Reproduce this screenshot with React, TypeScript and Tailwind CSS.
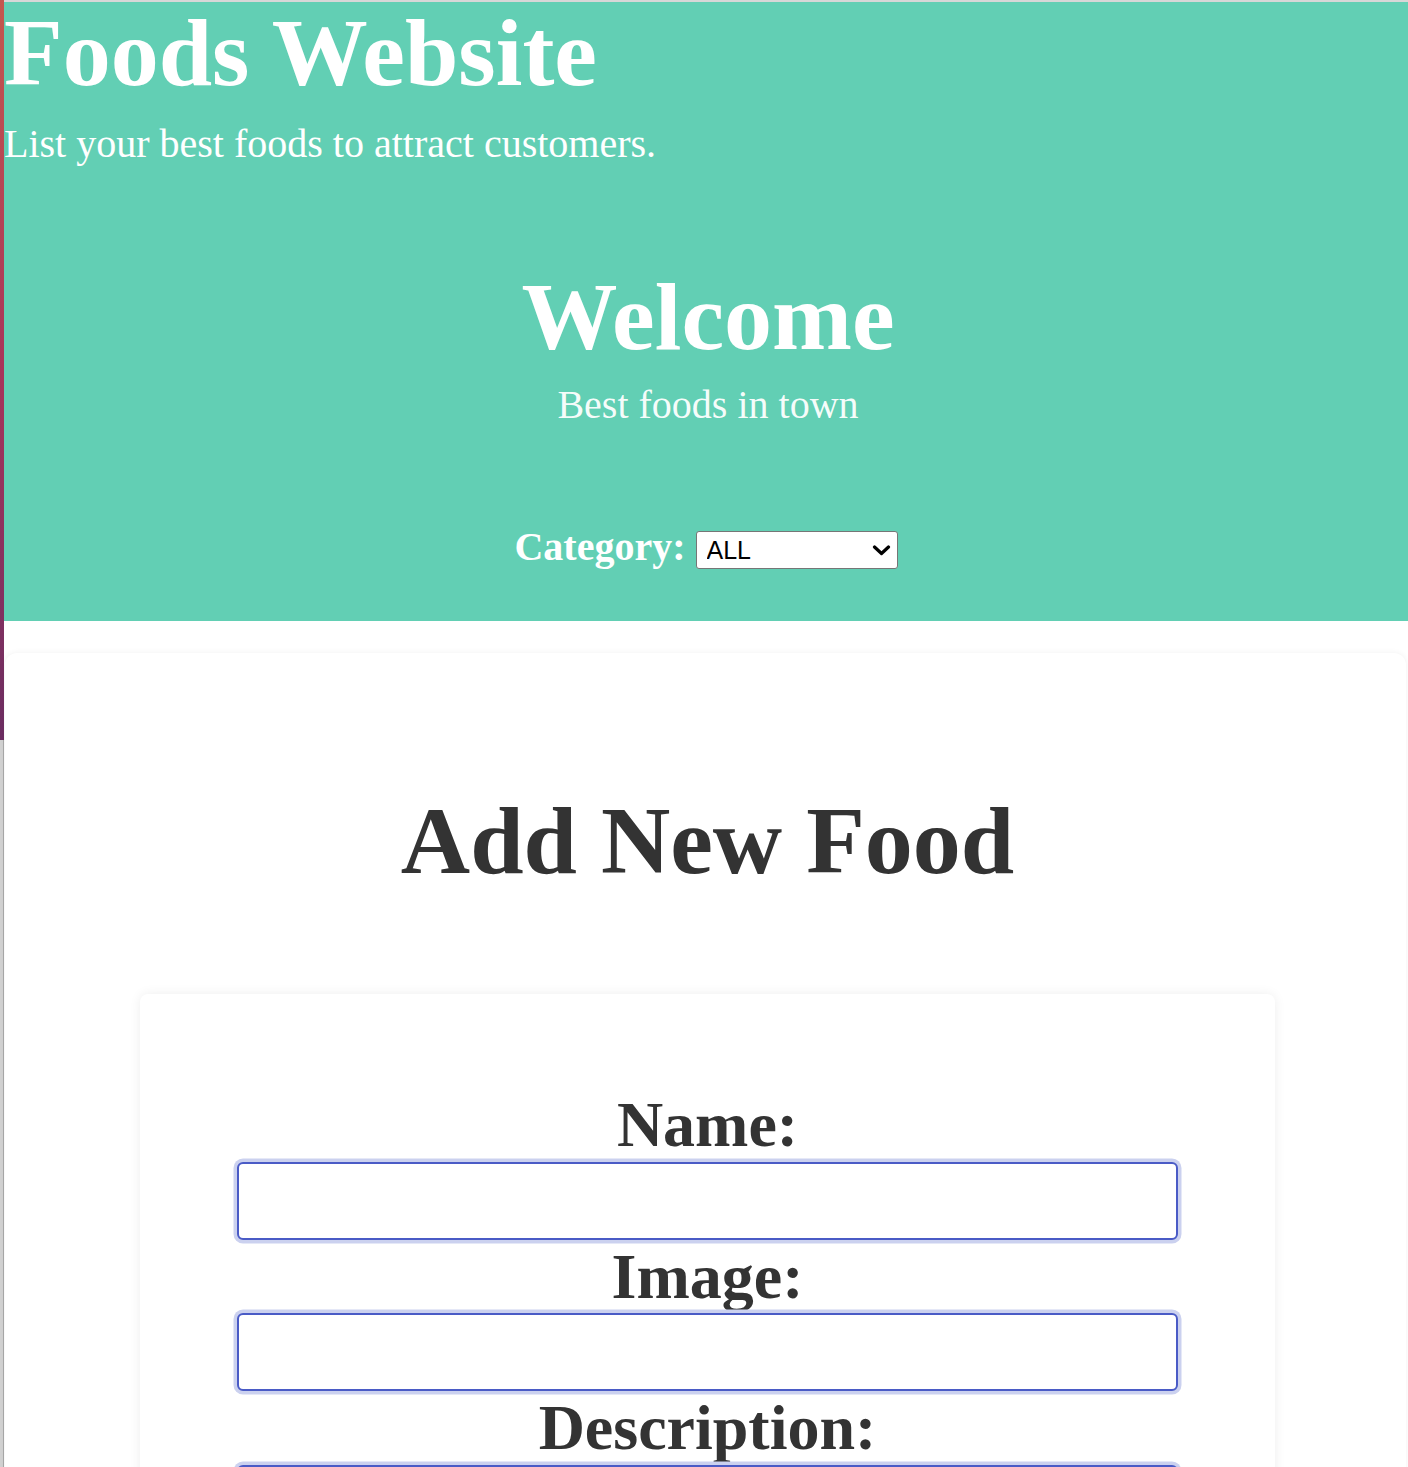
const serif = 'font-["Liberation_Serif","Times_New_Roman",serif]';

function Field({ label }: { label: string }) {
  return (
    <div className="flex flex-col">
      <label className={`${serif} block text-center text-[64px] leading-[73.5px] font-bold text-[#333333]`}>{label}</label>
      <input
        type="text"
        className="h-[78px] w-full rounded-[6px] border-2 border-[#4a5bc6] bg-white px-4 outline-none shadow-[0_0_0_3.5px_#cbd1ef]"
      />
    </div>
  );
}

export default function App() {
  return (
    <div className="flex min-h-[1467px] w-[1408px] bg-white">
      <div className="flex w-[4px] shrink-0 flex-col">
        <div className="h-[740px] bg-gradient-to-b from-[#c4574d] via-[#a8345a] to-[#6c2d62]"></div>
        <div className="flex-1 border-r border-[#a9a9a9] bg-[#d2d2d2]"></div>
      </div>

      <div className="flex min-w-0 flex-1 flex-col border-t-2 border-[#d7d7d7]">
        <header className="flex h-[619px] flex-col bg-[#62cfb4] pt-[3px] text-white">
          <h1 className={`${serif} text-[96px] leading-none font-bold`}>Foods Website</h1>
          <p className={`${serif} mt-[23px] text-[40px] leading-none`}>List your best foods to attract customers.</p>

          <h2 className={`${serif} mt-[105px] pl-[4px] text-center text-[96px] leading-none font-bold`}>Welcome</h2>
          <p className={`${serif} mt-[20px] pl-[4px] text-center text-[40px] leading-none text-white/95`}>Best foods in town</p>

          <div className="mt-[102px] flex items-start justify-center gap-[10px]">
            <span className={`${serif} text-[40px] leading-none font-bold`}>Category:</span>
            <div className="relative mt-[4px]">
              <select className='h-[38px] w-[202px] appearance-none rounded-[3px] border border-[#767676] bg-white pl-[10px] font-["Liberation_Sans",Arial,sans-serif] text-[25px] leading-none text-black outline-none'>
                <option>ALL</option>
                <option>Breakfast</option>
                <option>Lunch</option>
                <option>Dinner</option>
              </select>
              <svg
                className="pointer-events-none absolute top-[14px] right-[7px] h-[11px] w-[19px]"
                viewBox="0 0 19 11"
                fill="none"
                stroke="black"
                strokeWidth="3.2"
                strokeLinecap="round"
                strokeLinejoin="round"
              >
                <polyline points="2.5,2 9.5,8.5 16.5,2" />
              </svg>
            </div>
          </div>
        </header>

        <main className="mt-[32px] mr-[2px] ml-[1px] flex-1 rounded-t-[12px] bg-white pt-[140px] shadow-[0_0_6px_rgba(0,0,0,0.06)]">
          <h2 className={`${serif} pl-[4px] text-center text-[96px] leading-none font-bold text-[#333333]`}>Add New Food</h2>

          <div className="mt-[105px] mr-[131px] ml-[135px] rounded-[8px] bg-white px-[97px] pt-[94px] pb-10 shadow-[0_0_12px_rgba(0,0,0,0.07)]">
            <form className="flex flex-col">
              <Field label="Name:" />
              <Field label="Image:" />
              <Field label="Description:" />
            </form>
          </div>
        </main>
      </div>
    </div>
  );
}
